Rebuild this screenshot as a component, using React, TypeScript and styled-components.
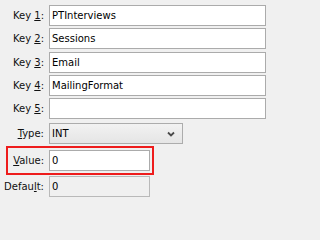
import React from 'react';
import styled, { createGlobalStyle } from 'styled-components';

const GlobalStyle = createGlobalStyle`
  html, body {
    margin: 0;
    padding: 0;
    background: #f0f0f0;
  }
  body {
    font-family: "DejaVu Sans", "Liberation Sans", sans-serif;
    font-size: 10px;
    color: #000;
  }
`;

const Form = styled.div`
  display: flex;
  flex-direction: column;
  padding-top: 5px;
  width: 271px;
  height: 203px;
  box-sizing: border-box;
`;

const Row = styled.div<{ mt?: number }>`
  display: flex;
  align-items: center;
  height: 21px;
  margin-top: ${({ mt }) => mt ?? 0}px;
`;

const Label = styled.label<{ w?: number }>`
  width: ${({ w }) => w ?? 49}px;
  box-sizing: border-box;
  padding-right: 5px;
  text-align: right;
  white-space: nowrap;
  flex-shrink: 0;
  color: #111;
`;

const Field = styled.input<{ w: number }>`
  width: ${({ w }) => w}px;
  height: 21px;
  box-sizing: border-box;
  border: 1px solid #ababab;
  background: #fff;
  padding: 0 2px;
  margin: 0;
  font: inherit;
  color: #000;
  outline: none;

  &:disabled {
    background: #f0f0f0;
    border-color: #b9b9b9;
    color: #000;
  }
`;

const SelectBox = styled.div<{ w: number }>`
  width: ${({ w }) => w}px;
  height: 21px;
  box-sizing: border-box;
  border: 1px solid #acacac;
  background: linear-gradient(#f2f2f2, #e5e5e5);
  display: flex;
  align-items: center;
  justify-content: space-between;
  padding: 0 7px 0 2px;
`;

const Highlight = styled.div`
  display: flex;
  align-self: flex-start;
  margin-top: 2px;
  margin-left: 6px;
  padding: 2px 2px 2px 0;
  border: 2px solid #ee1c1c;
`;

const Chevron = () => (
  <svg width="8" height="6" viewBox="0 0 8 6">
    <path d="M1 1.5 L4 4.5 L7 1.5" fill="none" stroke="#4a4a4a" strokeWidth="1.8" />
  </svg>
);

const keys = ['PTInterviews', 'Sessions', 'Email', 'MailingFormat', ''];

export default function App() {
  return (
    <>
      <GlobalStyle />
      <Form>
        {keys.map((v, i) => (
          <Row key={i} mt={i === 0 ? 0 : i === 2 ? 3 : 2}>
            <Label>
              Key <u>{i + 1}</u>:
            </Label>
            <Field w={217} defaultValue={v} />
          </Row>
        ))}
        <Row mt={4}>
          <Label>
            <u>T</u>ype:
          </Label>
          <SelectBox w={134}>
            <span>INT</span>
            <Chevron />
          </SelectBox>
        </Row>
        <Highlight>
          <Row>
            <Label w={41}>
              <u>V</u>alue:
            </Label>
            <Field w={101} defaultValue="0" />
          </Row>
        </Highlight>
        <Row mt={1}>
          <Label>
            Defau<u>l</u>t:
          </Label>
          <Field w={101} defaultValue="0" disabled />
        </Row>
      </Form>
    </>
  );
}
